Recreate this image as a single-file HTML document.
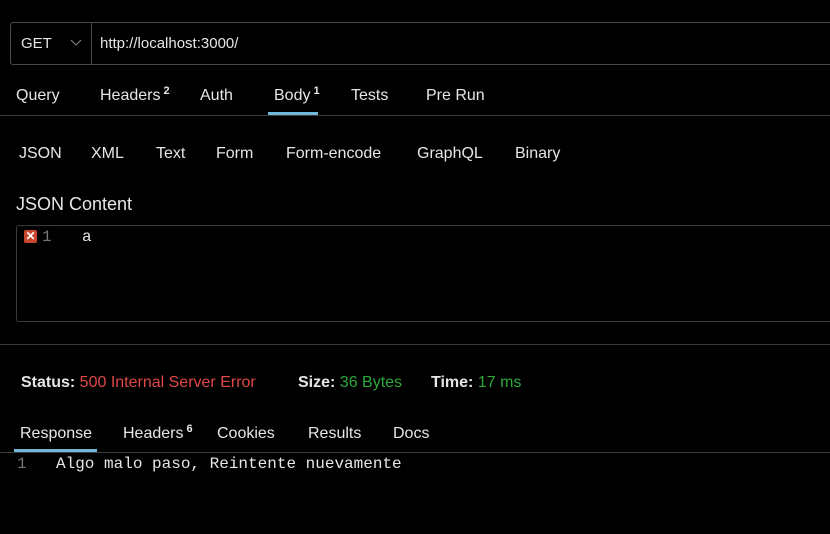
<!DOCTYPE html>
<html><head><meta charset="utf-8"><style>
body{margin:0;width:830px;height:534px;background:#000;color:#e6e6e6;font-family:"Liberation Sans",sans-serif;position:relative;overflow:hidden}
.a{position:absolute;white-space:nowrap}
.t{font-size:16px;line-height:20px}
.s{font-size:11px;font-weight:bold;position:relative;top:-6px;margin-left:3px;line-height:0}
.mono{font-family:"Liberation Mono",monospace;font-size:16px}
</style></head><body>
<div class="a" style="left:10px;top:22px;width:830px;height:41px;border:1px solid #4a4a4a;border-radius:3px"></div>
<div class="a" style="left:91px;top:23px;width:1px;height:41px;background:#4a4a4a"></div>
<div class="a t" style="left:21px;top:34px;font-size:15px">GET</div>
<svg class="a" style="left:70px;top:39px" width="12" height="8"><path d="M1 1 L6 6 L11 1" stroke="#888" fill="none" stroke-width="1"/></svg>
<div class="a t" style="left:100px;top:34px;font-size:15px">http://localhost:3000/</div>

<div class="a t" style="left:16px;top:86px">Query</div>
<div class="a t" style="left:100px;top:86px">Headers<span class="s">2</span></div>
<div class="a t" style="left:200px;top:86px">Auth</div>
<div class="a t" style="left:274px;top:86px">Body<span class="s">1</span></div>
<div class="a t" style="left:351px;top:86px">Tests</div>
<div class="a t" style="left:426px;top:86px">Pre Run</div>
<div class="a" style="left:268px;top:112px;width:50px;height:3px;background:#6fb8d8"></div>
<div class="a" style="left:0;top:115px;width:830px;height:1px;background:#3a3a3a"></div>

<div class="a t" style="left:19px;top:144px">JSON</div>
<div class="a t" style="left:91px;top:144px">XML</div>
<div class="a t" style="left:156px;top:144px">Text</div>
<div class="a t" style="left:216px;top:144px">Form</div>
<div class="a t" style="left:286px;top:144px">Form-encode</div>
<div class="a t" style="left:417px;top:144px">GraphQL</div>
<div class="a t" style="left:515px;top:144px">Binary</div>

<div class="a" style="left:16px;top:193px;font-size:18px;line-height:22px">JSON Content</div>
<div class="a" style="left:16px;top:225px;width:830px;height:95px;border:1px solid #3a3a3a;border-radius:3px"></div>
<div class="a" style="left:24px;top:230px;width:13px;height:13px;background:#c8452e;border-radius:2px;color:#fff;font-size:12px;line-height:13px;text-align:center;font-weight:bold">✕</div>
<div class="a mono" style="left:42px;top:228px;color:#777;line-height:18px">1</div>
<div class="a mono" style="left:82px;top:228px;line-height:18px">a</div>

<div class="a" style="left:0;top:344px;width:830px;height:1px;background:#3a3a3a"></div>
<div class="a t" style="left:21px;top:373px;font-weight:bold;font-size:16px">Status: <span style="color:#e04848;font-weight:normal">500 Internal Server Error</span></div>
<div class="a t" style="left:298px;top:373px;font-weight:bold">Size: <span style="color:#2fa83a;font-weight:normal">36 Bytes</span></div>
<div class="a t" style="left:431px;top:373px;font-weight:bold">Time: <span style="color:#2fa83a;font-weight:normal">17 ms</span></div>

<div class="a t" style="left:20px;top:424px">Response</div>
<div class="a t" style="left:123px;top:424px">Headers<span class="s">6</span></div>
<div class="a t" style="left:217px;top:424px">Cookies</div>
<div class="a t" style="left:308px;top:424px">Results</div>
<div class="a t" style="left:393px;top:424px">Docs</div>
<div class="a" style="left:14px;top:449px;width:83px;height:3px;background:#6fb8d8"></div>
<div class="a" style="left:0;top:452px;width:830px;height:1px;background:#3a3a3a"></div>
<div class="a mono" style="left:17px;top:455px;color:#777;line-height:18px">1</div>
<div class="a mono" style="left:56px;top:455px;line-height:18px">Algo malo paso, Reintente nuevamente</div>
</body></html>
